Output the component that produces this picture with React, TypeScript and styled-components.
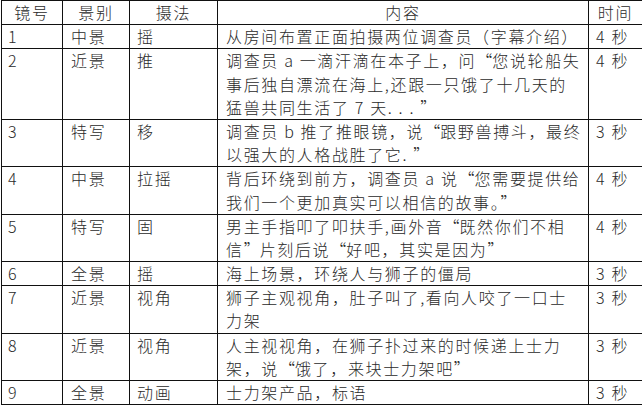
import styled, { createGlobalStyle } from "styled-components";

const GlobalStyle = createGlobalStyle`
  html, body {
    margin: 0;
    padding: 0;
    background: #fff;
  }
`;

type Shot = {
  no: string;
  scale: string;
  move: string;
  lines: string[];
  time: string;
};

const shots: Shot[] = [
  { no: "1", scale: "中景", move: "摇", lines: ["从房间布置正面拍摄两位调查员（字幕介绍）"], time: "4 秒" },
  {
    no: "2",
    scale: "近景",
    move: "推",
    lines: [
      "调查员 a 一滴汗滴在本子上，问“您说轮船失",
      "事后独自漂流在海上,还跟一只饿了十几天的",
      "猛兽共同生活了 7 天. . . ”",
    ],
    time: "4 秒",
  },
  {
    no: "3",
    scale: "特写",
    move: "移",
    lines: ["调查员 b 推了推眼镜，说“跟野兽搏斗，最终", "以强大的人格战胜了它. ”"],
    time: "3 秒",
  },
  {
    no: "4",
    scale: "中景",
    move: "拉摇",
    lines: ["背后环绕到前方，调查员 a 说“您需要提供给", "我们一个更加真实可以相信的故事。”"],
    time: "4 秒",
  },
  {
    no: "5",
    scale: "特写",
    move: "固",
    lines: ["男主手指叩了叩扶手,画外音“既然你们不相", "信”片刻后说“好吧，其实是因为”"],
    time: "4 秒",
  },
  { no: "6", scale: "全景", move: "摇", lines: ["海上场景，环绕人与狮子的僵局"], time: "3 秒" },
  {
    no: "7",
    scale: "近景",
    move: "视角",
    lines: ["狮子主观视角，肚子叫了,看向人咬了一口士", "力架"],
    time: "3 秒",
  },
  {
    no: "8",
    scale: "近景",
    move: "视角",
    lines: ["人主视视角，在狮子扑过来的时候递上士力", "架，说“饿了，来块士力架吧”"],
    time: "3 秒",
  },
  { no: "9", scale: "全景", move: "动画", lines: ["士力架产品，标语"], time: "3 秒" },
];

const Sheet = styled.table`
  margin: 0 0 0 1px;
  width: 641px;
  table-layout: fixed;
  border-collapse: collapse;
  font-family: "Noto Sans CJK SC", "Liberation Sans", sans-serif;
  font-weight: 300;
  font-size: 16px;
  letter-spacing: 1.65px;
  line-height: 23.2px;
  color: #2a2a2a;
`;

const HeadCell = styled.th`
  border: 1px solid #111;
  padding: 0;
  font-weight: 300;
  text-align: center;
  vertical-align: top;
  white-space: nowrap;
`;

const Cell = styled.td<{ $pad?: number }>`
  border: 1px solid #111;
  padding: 0 0 0 ${(p) => p.$pad ?? 7}px;
  text-align: left;
  vertical-align: top;
  white-space: nowrap;
  overflow: hidden;
`;

const Line = styled.div`
  height: 23.2px;
`;

// full-width curly quotes, as the Song typeface in the source document sets them
const Quote = styled.span`
  font-feature-settings: "fwid" 1;
  letter-spacing: 0;
`;

function renderLine(text: string) {
  return text.split(/([“”])/).map((part, i) =>
    part === "“" || part === "”" ? <Quote key={i}>{part}</Quote> : part
  );
}

export default function App() {
  return (
    <>
      <GlobalStyle />
      <Sheet lang="zh-CN">
        <colgroup>
          <col style={{ width: 61 }} />
          <col style={{ width: 67 }} />
          <col style={{ width: 88 }} />
          <col style={{ width: 371 }} />
          <col style={{ width: 54 }} />
        </colgroup>
        <thead>
          <tr>
            <HeadCell>镜号</HeadCell>
            <HeadCell>景别</HeadCell>
            <HeadCell>摄法</HeadCell>
            <HeadCell>内容</HeadCell>
            <HeadCell>时间</HeadCell>
          </tr>
        </thead>
        <tbody>
          {shots.map((s) => (
            <tr key={s.no}>
              <Cell $pad={6}>{s.no}</Cell>
              <Cell $pad={8}>{s.scale}</Cell>
              <Cell>{s.move}</Cell>
              <Cell $pad={8}>
                {s.lines.map((l, i) => (
                  <Line key={i}>{renderLine(l)}</Line>
                ))}
              </Cell>
              <Cell>{s.time}</Cell>
            </tr>
          ))}
        </tbody>
      </Sheet>
    </>
  );
}
